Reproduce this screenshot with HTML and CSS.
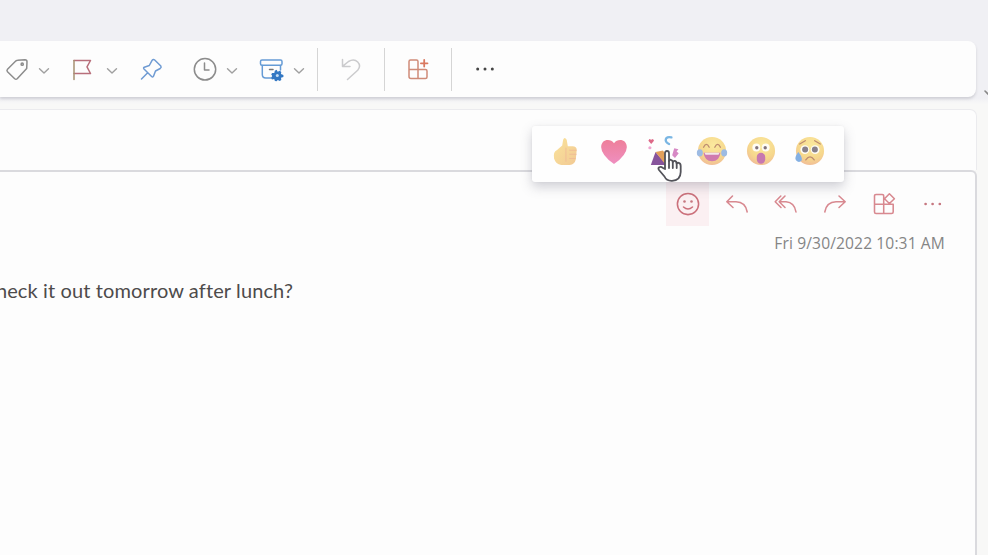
FILE: index.html
```html
<!DOCTYPE html>
<html lang="en">
<head>
<meta charset="utf-8">
<title>Mail</title>
<link rel="stylesheet" href="styles.css">
</head>
<body>
<div class="app">
  <header class="titlebar"></header>
  <nav class="toolbar">
    <div class="tool tag"><svg class="icon" viewBox="0 0 24 24"><path d="M12.5 3.2 20 2.7Q22 2.7 22 4.7L21.7 11.5 12.2 21.7Q11 22.8 9.7 21.7L2.5 14.8Q1.4 13.5 2.5 12.3L11 3.8Q11.8 3.2 12.5 3.2Z"/><circle cx="17.2" cy="7.2" r="1.1"/></svg><svg class="chev" viewBox="0 0 12 8"><path d="m1.5 1.8 4.5 4.2 4.5-4.2"/></svg></div>
    <div class="tool flag"><svg class="icon" viewBox="0 0 24 24"><path d="M4 3.5H20.5L17 9.8 20.5 16.5H4"/><path class="olive" d="M4 22.5V3.5"/></svg><svg class="chev" viewBox="0 0 12 8"><path d="m1.5 1.8 4.5 4.2 4.5-4.2"/></svg></div>
    <div class="tool pin"><svg class="icon" viewBox="0 0 24 24"><path d="M13.2 3.2Q14.4 1.8 15.7 3L21.8 9Q22.7 10.5 21.2 11.5L16.5 14 14.5 19.2Q13.8 20.6 12.6 19.5L5 12Q4 10.8 5.3 10.2L10.3 8.5ZM8.7 15.7 2.5 22"/></svg></div>
    <div class="tool clock"><svg class="icon" viewBox="0 0 24 24"><circle cx="12" cy="12.3" r="10.7"/><path d="M11.5 6V13H16"/></svg><svg class="chev" viewBox="0 0 12 8"><path d="m1.5 1.8 4.5 4.2 4.5-4.2"/></svg></div>
    <div class="tool archive"><svg class="icon" viewBox="0 0 26 24"><rect x="1.5" y="3" width="21.5" height="5.2" rx="1.5"/><path d="M3.3 8.5V17.5Q3.3 21 6.8 21H12M21.5 8.5V13"/><path class="lid" d="M10.5 12.5H14"/><path class="gear" d="m17.6 12.8 1.1 2 2.2-1 1.4 1.2-.4 2.1 2.5.9v2l-2.4.8.3 2.1-1.6 1.1-1.9-1-1.2 1.3-1.7-.2-.7-2-2.2.3-1-1.5 1.2-1.9-1-1.7 1-1.4 2.1.2.5-2.3z"/><circle class="hub" cx="18.3" cy="18.4" r="1.5"/></svg><svg class="chev" viewBox="0 0 12 8"><path d="m1.5 1.8 4.5 4.2 4.5-4.2"/></svg></div>
    <span class="divider"></span>
    <div class="tool undo"><svg class="icon" viewBox="0 0 24 24"><path d="M3.5 2.5V9.5H11M3.8 9.2 9.5 4.5C17 0 23.5 7.5 18.7 13.2L8.5 22.5"/></svg></div>
    <span class="divider"></span>
    <div class="tool apps"><svg class="icon" viewBox="0 0 24 24"><path d="M12 12.5V4.5Q12 3 10.5 3H4.5Q3 3 3 4.5V19.5Q3 21.5 5 21.5H19.5Q21 21.5 21 20V14Q21 12.5 19.5 12.5H3M12 12.5V21.5"/><path class="plus" d="M18.2 3V9.6M14.9 6.3H21.5"/></svg></div>
    <span class="divider"></span>
    <div class="tool more"><svg class="icon" viewBox="0 0 24 24"><circle cx="4.7" cy="12" r="1.5"/><circle cx="12" cy="12" r="1.5"/><circle cx="19.3" cy="12" r="1.5"/></svg></div>
  </nav>
  <section class="subject"></section>
  <main class="message">
    <div class="actions">
      <button class="action active" aria-label="React"><svg viewBox="0 0 24 24"><circle cx="12" cy="12" r="10.6"/><path d="M7.5 15Q12 19 16.5 15"/><circle class="dot" cx="8.5" cy="9.5" r="1.3"/><circle class="dot" cx="15.5" cy="9.5" r="1.3"/></svg></button>
      <button class="action" aria-label="Reply"><svg viewBox="0 0 24 24"><path d="M7.5 4 1.8 9.8 8 15.5M2 9.8H11Q20.5 10 22.2 20"/></svg></button>
      <button class="action" aria-label="Reply all"><svg viewBox="0 0 24 24"><path d="M6.8 4 1.2 9.8 7 15.5M11 4 5.2 9.8 11 15.5M5.5 9.8H12Q20.5 10.5 22 20"/></svg></button>
      <button class="action" aria-label="Forward"><svg viewBox="0 0 24 24"><path d="M16 4 22.2 9.8 16 15.5M22 9.8H13Q3.5 10 1.8 20"/></svg></button>
      <button class="action" aria-label="Apps"><svg viewBox="0 0 24 24"><path d="M11.7 12.2V4Q11.7 2.5 10.2 2.5H4Q2.5 2.5 2.5 4V20Q2.5 21.5 4 21.5H19.5Q21.2 21.5 21.2 20V12.2H2.5M11.7 12.2V21.5M17.4 1.7 22.4 6.7 17.4 11.5 12.5 6.7Z"/></svg></button>
      <button class="action" aria-label="More"><svg viewBox="0 0 24 24"><circle class="dot" cx="4.6" cy="12" r="1.35"/><circle class="dot" cx="11.6" cy="12" r="1.35"/><circle class="dot" cx="18.8" cy="12" r="1.35"/></svg></button>
    </div>
    <time class="date">Fri 9/30/2022 10:31 AM</time>
    <p class="text"><span>heck it out tomorrow after lunch?</span></p>
  </main>
  <svg class="scroll-arrow" viewBox="0 0 8 8"><path d="m1 1 4 4 4-4"/></svg>

  <div class="reactions">
    <svg viewBox="0 0 32 32"><defs><radialGradient id="face" cx=".55" cy=".3" r=".8"><stop offset="0" stop-color="#fbea9e"/><stop offset=".6" stop-color="#f6d78c"/><stop offset="1" stop-color="#efb39c"/></radialGradient><linearGradient id="heart" x2="0" y2="1"><stop stop-color="#ee7f9a"/><stop offset="1" stop-color="#ef8fc0"/></linearGradient><linearGradient id="thumb" x2="1" y2="1"><stop stop-color="#fae49b"/><stop offset="1" stop-color="#f2c994"/></linearGradient></defs><path fill="url(#thumb)" d="M14 4Q15.5 0 17.8 4L19 11H24Q28.5 11 28.5 15L27.5 25Q26.5 30 21 31H12Q6 30 4.3 24Q3 17 7.5 15L13 10Z"/><path class="crease" d="M21 15.2H28M21 19.5H28M21 24H27M17 13V27"/></svg>
    <svg viewBox="0 0 32 32"><path fill="url(#heart)" d="M16 30Q2.5 20.5 2.3 12C2 3.5 12 1.7 16 7.7C20 1.7 30 3.5 29.7 12Q29.5 20.5 16 30Z"/></svg>
    <svg viewBox="0 0 32 32"><path fill="#87549c" d="M3 31 8 17 20 31Z"/><path fill="#e3a05a" d="m8 17 8-1.5L25 29l-6 2Z"/><path class="confetti" d="M25 1.5C18-.5 17 6 22.5 8.5"/><path fill="#dd6887" d="M3.4 8.5.4 5 1.4 3.2 3.4 4 5.3 3.2 6.4 5Z"/><circle cx="2" cy="12.5" r="1.7" fill="#efa5cf"/><path fill="#d789c5" d="m28 13 4.5 1-2 2.5 2.3 2-4 5-3-3z"/></svg>
    <svg viewBox="0 0 32 32"><circle cx="16" cy="16" r="15" fill="url(#face)"/><path class="brow" d="M7 12q3-6 6 0M19 12q3-6 6 0"/><path fill="#d07aae" d="M7 18H25Q24 27 16 27Q8 27 7 18Z"/><path fill="#f3e6e9" d="M8 18H24L23 20H9Z"/><ellipse cx="3" cy="18" rx="3.2" ry="4" fill="#9dbbe3"/><ellipse cx="29" cy="18" rx="3.2" ry="4" fill="#9dbbe3"/></svg>
    <svg viewBox="0 0 32 32"><circle cx="16" cy="16" r="15" fill="url(#face)"/><circle cx="11" cy="12.3" r="4.2" fill="#fffdf5"/><circle cx="21" cy="12.3" r="4.2" fill="#fffdf5"/><circle cx="11.5" cy="12.5" r="1.8" fill="#81737b"/><circle cx="20.5" cy="12.5" r="1.8" fill="#81737b"/><rect x="11.5" y="18" width="9" height="11.5" rx="4.5" fill="#c778b0"/></svg>
    <svg viewBox="0 0 32 32"><circle cx="16" cy="16" r="15" fill="url(#face)"/><circle cx="10.5" cy="14.5" r="4.7" fill="#fffdf5"/><circle cx="21.5" cy="14.5" r="4.7" fill="#fffdf5"/><circle cx="10.8" cy="14.5" r="3.2" fill="#88818a"/><circle cx="21.2" cy="14.5" r="3.2" fill="#88818a"/><path class="brow" d="M5 8.5 11 5M21 5 27 8.5M11.5 25.5Q16 19 20.5 25.5"/><path fill="#84b0e3" d="M3.5 17Q-1 23 1 26Q4 29 7 26.5Q8.5 23 3.5 17Z"/></svg>
    <svg class="cursor" viewBox="0 0 26 34"><path d="M8 20V4.2Q8 2 10 2T12 4.2V12Q12.3 10.5 14 10.8Q15.6 11 15.7 13Q16.3 11.7 18 12Q19.5 12.3 19.6 14.5Q20.3 13.5 21.7 13.8Q23.7 14.3 23.7 17V23Q23.5 31.5 15 31.8Q9.5 32 7.5 27.5L2 21Q.8 19.2 2.2 18.2Q4 17.2 5.5 18.7Z"/><path d="M12 12V19M15.8 13V19M19.7 14.5V19"/></svg>
  </div>
</div>
</body>
</html>
```
FILE: styles.css
```css
* { box-sizing: border-box; }
body { margin: 0; background: #f3f3f6; overflow: hidden; }
.app {
  position: relative;
  width: 988px;
  height: 555px;
  padding-right: 11px;
  display: flex;
  flex-direction: column;
  overflow: hidden;
  background: linear-gradient(#f0f0f4 0 98px, #f8f8f7 104px);
}
svg { display: block; overflow: visible; fill: none; stroke-linecap: round; stroke-linejoin: round; }
.titlebar { height: 41px; flex: none; }

.toolbar {
  height: 56px;
  flex: none;
  margin-right: 1px;
  display: flex;
  align-items: center;
  padding-left: 5px;
  background: #fdfdfd;
  border-radius: 0 8px 8px 0;
  box-shadow: 0 2px 3px #cfcfd5;
}
.tool { display: flex; align-items: center; flex: none; stroke: #8c8c8c; stroke-width: 1.5; }
.tool .icon { width: 24px; height: 24px; }
.chev { width: 12px; height: 8px; margin: 4px 0 0 9px; stroke: #a0a0a0; stroke-width: 1.4; }
.flag { margin-left: 20px; stroke: #b86f7b; }
.flag .chev { margin-left: 12px; }
.olive { stroke: #a69072; }
.pin { margin-left: 21px; stroke: #6f9bd3; }
.clock { margin-left: 30px; }
.clock .chev { margin-left: 9px; }
.archive { margin-left: 21px; stroke: #659bd5; }
.archive .icon { width: 26px; }
.archive .chev { margin-left: 8px; }
.archive .lid { stroke: #777; }
.gear { fill: #3478c3; stroke: none; }
.hub { fill: #c6def4; stroke: none; }
.divider { width: 1px; height: 43px; background: #d5d5d5; flex: none; margin-left: 12px; }
.undo { margin-left: 21px; stroke: #cbcbcd; }
.undo + .divider { margin-left: 21px; }
.apps { margin-left: 21px; stroke: #cf8b78; }
.apps + .divider { margin-left: 21px; }
.plus { stroke: #d9785f; stroke-width: 1.8; }
.more { margin-left: 21px; stroke: none; }
.more circle { fill: #454545; }

.subject {
  height: 61px;
  flex: none;
  margin-top: 12px;
  background: #fdfdfd;
  border: 1px solid #ebebee;
  border-width: 1px 1px 0 0;
  border-radius: 0 7px 0 0;
}
.message {
  flex: 1;
  display: flex;
  flex-direction: column;
  background: #fdfdfd;
  border: solid #dadade;
  border-width: 2px 2px 0 0;
  border-radius: 0 6px 0 0;
}
.actions { display: flex; justify-content: flex-end; gap: 6px; padding: 10px 21px 0 0; }
.action { width: 43px; height: 44px; padding: 0; border: 0; background: none; display: grid; place-items: center; }
.action svg { width: 24px; height: 24px; stroke: #d88990; stroke-width: 1.55; }
.action.active { background: #fbf0f2; }
.action.active svg { stroke: #cb707b; }
.action .dot { fill: #c67780; stroke: none; }
.date {
  align-self: flex-end;
  margin: 6px 30px 0 0;
  font: 15.6px/22px "Open Sans", sans-serif;
  letter-spacing: 0.12px;
  color: #858585;
  white-space: nowrap;
}
.text {
  width: 293px;
  margin: 25px 0 0;
  display: flex;
  justify-content: flex-end;
  font: 20px/22px Lato, sans-serif;
  letter-spacing: 0.12px;
  color: #4d4b4b;
  white-space: nowrap;
}
.scroll-arrow { position: absolute; left: 984px; top: 90px; width: 8px; height: 8px; stroke: #888; stroke-width: 1.6; }

.reactions {
  position: absolute;
  left: 532px;
  top: 126px;
  width: 312px;
  height: 56px;
  padding: 11px 18px 0 19px;
  display: flex;
  gap: 21px;
  background: #fefefe;
  border-radius: 3px;
  box-shadow: 0 5px 12px rgba(90, 90, 110, .28), 0 0 3px rgba(0, 0, 0, .05);
}
.reactions > svg { width: 28px; height: 28px; flex: none; }
.reactions > svg:not(.cursor) { transform: scale(1.07); }
.crease { stroke: #efb795; stroke-width: .8; }
.confetti { stroke: #7ab6e3; stroke-width: 2.5; }
.brow { stroke: #bd8c70; stroke-width: 1.4; }
.reactions > .cursor {
  position: absolute;
  left: 125px;
  top: 23px;
  width: 26px;
  height: 34px;
  fill: #fff;
  stroke: #53535a;
  stroke-width: 1.8;
}
```
